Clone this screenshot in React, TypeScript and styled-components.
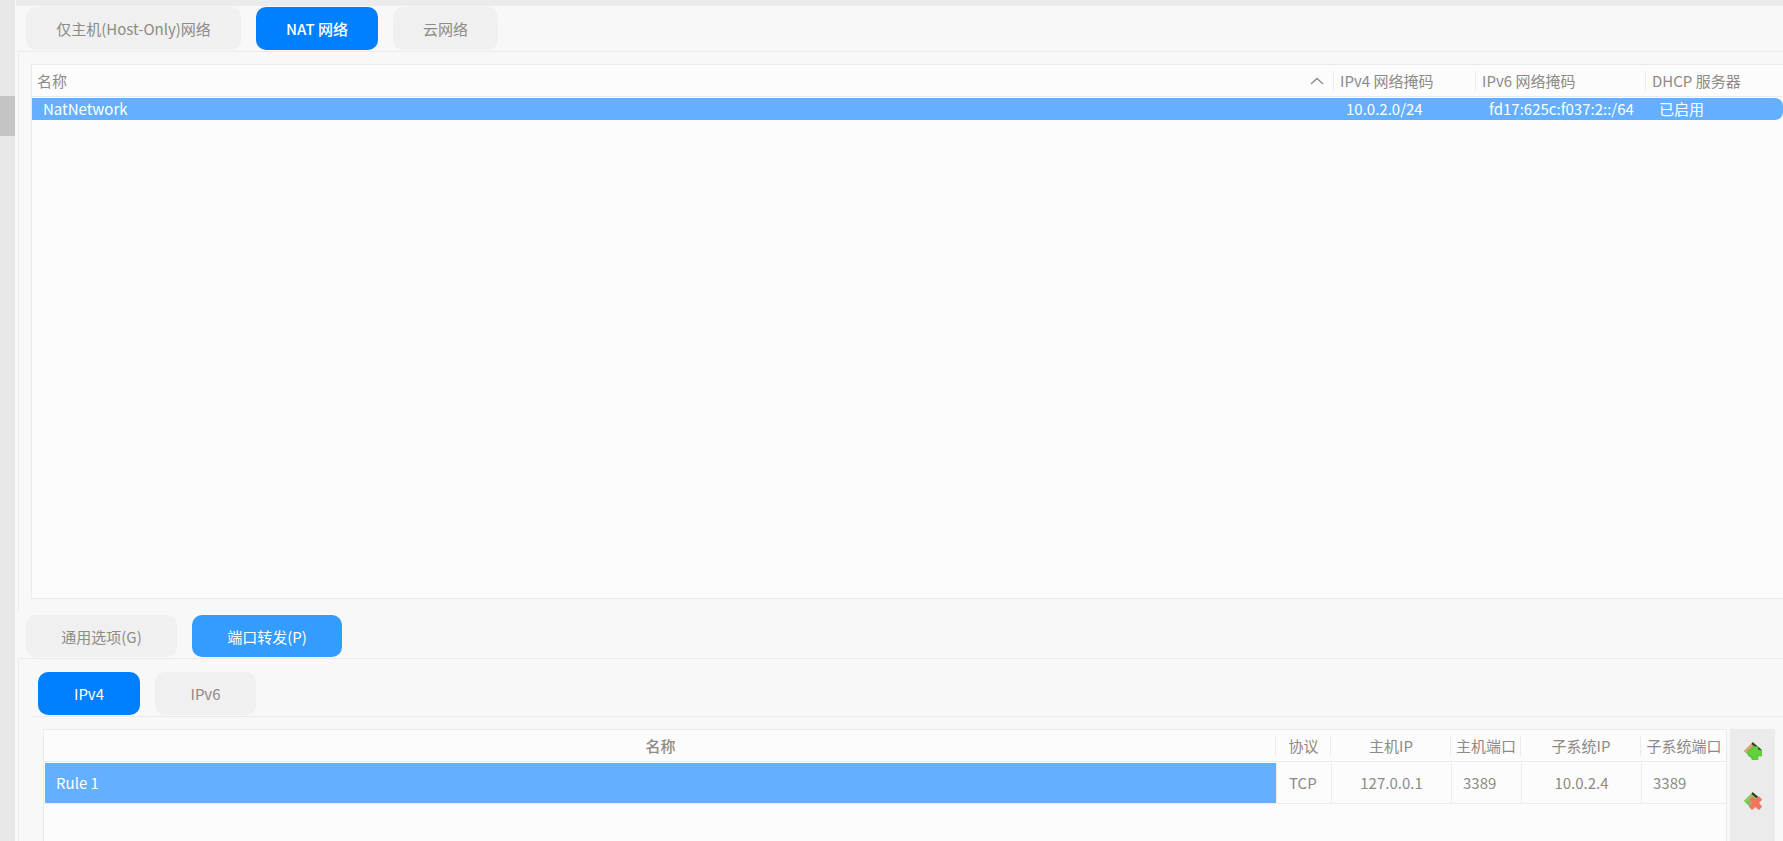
import React from 'react';
import styled, { createGlobalStyle } from 'styled-components';

const colors = {
  page: '#f8f8f8',
  rail: '#e8e8e8',
  line: '#ebebeb',
  table: '#fcfcfc',
  text: '#8e8a86',
  tabIdle: '#f0f0f0',
  tabActive: '#0080ff',
  tabActiveSoft: '#349cff',
  selected: '#64afff',
  white: '#ffffff',
};

const GlobalStyle = createGlobalStyle`
  html, body {
    margin: 0;
    padding: 0;
    background: ${colors.page};
  }
  body {
    font-family: 'Noto Sans CJK SC', 'Noto Sans', sans-serif;
    font-size: 15px;
    color: ${colors.text};
  }
`;

const Window = styled.div`
  display: flex;
  width: 1783px;
  height: 841px;
  overflow: hidden;
  background: ${colors.page};
`;

const Rail = styled.div`
  flex: none;
  width: 15px;
  padding-top: 96px;
  background: ${colors.rail};
`;

const RailThumb = styled.div`
  height: 40px;
  background: #c4c4c4;
`;

const Main = styled.div`
  flex: 1;
  min-width: 0;
  display: flex;
  flex-direction: column;
`;

const TopStrip = styled.div`
  flex: none;
  height: 6px;
  margin-left: 1px;
  background: ${colors.line};
`;

const TabBar = styled.div<{ $top: number; $left: number }>`
  flex: none;
  display: flex;
  gap: 15px;
  padding: ${(p) => p.$top}px 0 1px ${(p) => p.$left}px;
`;

const Tab = styled.div<{ $width: number; $height?: number; $state?: 'active' | 'soft'; $strong?: boolean }>`
  width: ${(p) => p.$width}px;
  height: ${(p) => p.$height ?? 43}px;
  display: flex;
  align-items: center;
  justify-content: center;
  border-radius: 10px;
  font-size: 15px;
  font-weight: ${(p) => (p.$strong ? 500 : 400)};
  color: ${(p) => (p.$state ? colors.white : colors.text)};
  background: ${(p) =>
    p.$state === 'active' ? colors.tabActive : p.$state === 'soft' ? colors.tabActiveSoft : colors.tabIdle};
`;

const NetworkPanel = styled.div`
  flex: none;
  height: 560px;
  box-sizing: border-box;
  margin-left: 3px;
  padding: 12px 0 0 12px;
  border-top: 1px solid ${colors.line};
  border-left: 1px solid ${colors.line};
`;

const NetworkTable = styled.div`
  height: 535px;
  box-sizing: border-box;
  border: 1px solid ${colors.line};
  border-right: none;
  background: ${colors.table};
`;

const networkColumns = '1301px 142px 170px 1fr';

const NetworkHeader = styled.div`
  display: grid;
  grid-template-columns: ${networkColumns};
  height: 31px;
  border-bottom: 1px solid ${colors.line};
  margin-bottom: 1px;
`;

const NetworkHeadCell = styled.div<{ $first?: boolean }>`
  position: relative;
  display: flex;
  align-items: center;
  justify-content: space-between;
  padding: 0 6px 0 ${(p) => (p.$first ? 5 : 7)}px;
  &::before {
    content: '';
    display: ${(p) => (p.$first ? 'none' : 'block')};
    position: absolute;
    left: 0;
    top: 6px;
    bottom: 5px;
    width: 1px;
    background: ${colors.line};
  }
`;

const NetworkRow = styled.div`
  display: grid;
  grid-template-columns: ${networkColumns};
  align-items: center;
  height: 22px;
  border-radius: 0 8px 8px 0;
  color: ${colors.white};
  background: ${colors.selected};
`;

const NetworkCell = styled.div<{ $inset: number }>`
  padding-left: ${(p) => p.$inset}px;
  line-height: 22px;
`;

const DetailPanel = styled.div`
  flex: 1;
  margin-left: 3px;
  padding-left: 12px;
  border-top: 1px solid ${colors.line};
  border-left: 1px solid ${colors.line};
`;

const RulesPanel = styled.div`
  display: flex;
  gap: 3px;
  padding: 12px 8px 0 12px;
  height: 140px;
  border-top: 1px solid ${colors.line};
`;

const RulesTable = styled.div`
  flex: 1;
  min-width: 0;
  border: 1px solid ${colors.line};
  background: ${colors.table};
`;

const RulesHeader = styled.div`
  display: grid;
  grid-template-columns: 1231px 55px 120px 70px 120px 86px;
  height: 31px;
  border-bottom: 1px solid ${colors.line};
  margin-bottom: 1px;
`;

const RulesHeadCell = styled.div<{ $first?: boolean }>`
  position: relative;
  display: flex;
  align-items: center;
  justify-content: center;
  white-space: nowrap;
  padding-left: 2px;
  font-weight: ${(p) => (p.$first ? 500 : 400)};
  &::before {
    content: '';
    display: ${(p) => (p.$first ? 'none' : 'block')};
    position: absolute;
    left: 0;
    top: 6px;
    bottom: 5px;
    width: 1px;
    background: ${colors.line};
  }
`;

const RulesRow = styled.div`
  display: grid;
  grid-template-columns: 1232px 55px 120px 70px 120px 85px;
  height: 41px;
  border-bottom: 1px solid ${colors.line};
  box-sizing: border-box;
`;

const RulesCell = styled.div<{ $inset?: number }>`
  display: flex;
  align-items: center;
  justify-content: ${(p) => (p.$inset === undefined ? 'center' : 'flex-start')};
  padding: 0 0 2px ${(p) => p.$inset ?? 0}px;
  border-left: 1px solid ${colors.line};
`;

const RulesNameCell = styled.div`
  display: flex;
  align-items: center;
  padding: 0 0 2px 11px;
  margin-left: 1px;
  color: ${colors.white};
  background: ${colors.selected};
`;

const SideBar = styled.div`
  flex: none;
  width: 45px;
  display: flex;
  flex-direction: column;
  align-items: center;
  gap: 32px;
  padding-top: 13px;
  background: ${colors.line};
`;

const ToolIcon = styled.svg`
  width: 18px;
  height: 18px;
  display: block;
`;

function AddRuleIcon() {
  return (
    <ToolIcon viewBox="0 0 18 18">
      <path d="M0 9 L9 0 L17 8 L8 17 Z" fill="#7cc05c" />
      <path d="M0 9 L8 1 L10 3 L2.500 10.500 Z" fill="#e2a272" />
      <path d="M8.500 0.300 L17.500 7.500 L16 9 L7.500 2 Z" fill="#333333" />
      <path
        d="M8 4.500 H14 V8 H18 V14 H14 V18 H8 V14 H4.500 V8 H8 Z"
        fill="#62d23c"
        stroke="#54b534"
        strokeWidth="0.6"
      />
    </ToolIcon>
  );
}

function RemoveRuleIcon() {
  return (
    <ToolIcon viewBox="0 0 18 18">
      <path d="M0 9 L9 0 L17 8 L8 17 Z" fill="#7cc05c" />
      <path d="M0 9 L8 1 L10 3 L2.500 10.500 Z" fill="#86cf58" />
      <path d="M8.500 0.300 L17.500 7.500 L16 9 L7.500 2 Z" fill="#333333" />
      <path
        d="M5 7.500 L8 4.500 L11.500 7 L15 4.500 L18 7.500 L15 11 L18 14.500 L15 18 L11.500 15 L8 18 L5 14.500 L8 11 Z"
        fill="#f4735c"
        stroke="#e8a080"
        strokeWidth="0.6"
      />
    </ToolIcon>
  );
}

const SortArrow = styled.svg`
  width: 14px;
  height: 8px;
  margin-right: 3px;
  display: block;
`;

export default function App() {
  return (
    <Window>
      <GlobalStyle />
      <Rail>
        <RailThumb />
      </Rail>
      <Main>
        <TopStrip />
        <TabBar $top={1} $left={11}>
          <Tab $width={215}>仅主机(Host-Only)网络</Tab>
          <Tab $width={122} $state="active" $strong>NAT 网络</Tab>
          <Tab $width={105}>云网络</Tab>
        </TabBar>
        <NetworkPanel>
          <NetworkTable>
            <NetworkHeader>
              <NetworkHeadCell $first>
                名称
                <SortArrow viewBox="0 0 14 8">
                  <path d="M1 7 L7 1.500 L13 7" fill="none" stroke="#8e8a86" strokeWidth="1.300" />
                </SortArrow>
              </NetworkHeadCell>
              <NetworkHeadCell>IPv4 网络掩码</NetworkHeadCell>
              <NetworkHeadCell>IPv6 网络掩码</NetworkHeadCell>
              <NetworkHeadCell>DHCP 服务器</NetworkHeadCell>
            </NetworkHeader>
            <NetworkRow>
              <NetworkCell $inset={11}>NatNetwork</NetworkCell>
              <NetworkCell $inset={13}>10.0.2.0/24</NetworkCell>
              <NetworkCell $inset={14}>fd17:625c:f037:2::/64</NetworkCell>
              <NetworkCell $inset={14}>已启用</NetworkCell>
            </NetworkRow>
          </NetworkTable>
        </NetworkPanel>
        <TabBar $top={4} $left={11}>
          <Tab $width={151} $height={42}>通用选项(G)</Tab>
          <Tab $width={150} $height={42} $state="soft">端口转发(P)</Tab>
        </TabBar>
        <DetailPanel>
          <TabBar $top={13} $left={7}>
            <Tab $width={102} $state="active">IPv4</Tab>
            <Tab $width={101}>IPv6</Tab>
          </TabBar>
          <RulesPanel>
            <RulesTable>
              <RulesHeader>
                <RulesHeadCell $first>名称</RulesHeadCell>
                <RulesHeadCell>协议</RulesHeadCell>
                <RulesHeadCell>主机IP</RulesHeadCell>
                <RulesHeadCell>主机端口</RulesHeadCell>
                <RulesHeadCell>子系统IP</RulesHeadCell>
                <RulesHeadCell>子系统端口</RulesHeadCell>
              </RulesHeader>
              <RulesRow>
                <RulesNameCell>Rule 1</RulesNameCell>
                <RulesCell $inset={12}>TCP</RulesCell>
                <RulesCell>127.0.0.1</RulesCell>
                <RulesCell $inset={11}>3389</RulesCell>
                <RulesCell>10.0.2.4</RulesCell>
                <RulesCell $inset={11}>3389</RulesCell>
              </RulesRow>
            </RulesTable>
            <SideBar>
              <AddRuleIcon />
              <RemoveRuleIcon />
            </SideBar>
          </RulesPanel>
        </DetailPanel>
      </Main>
    </Window>
  );
}
